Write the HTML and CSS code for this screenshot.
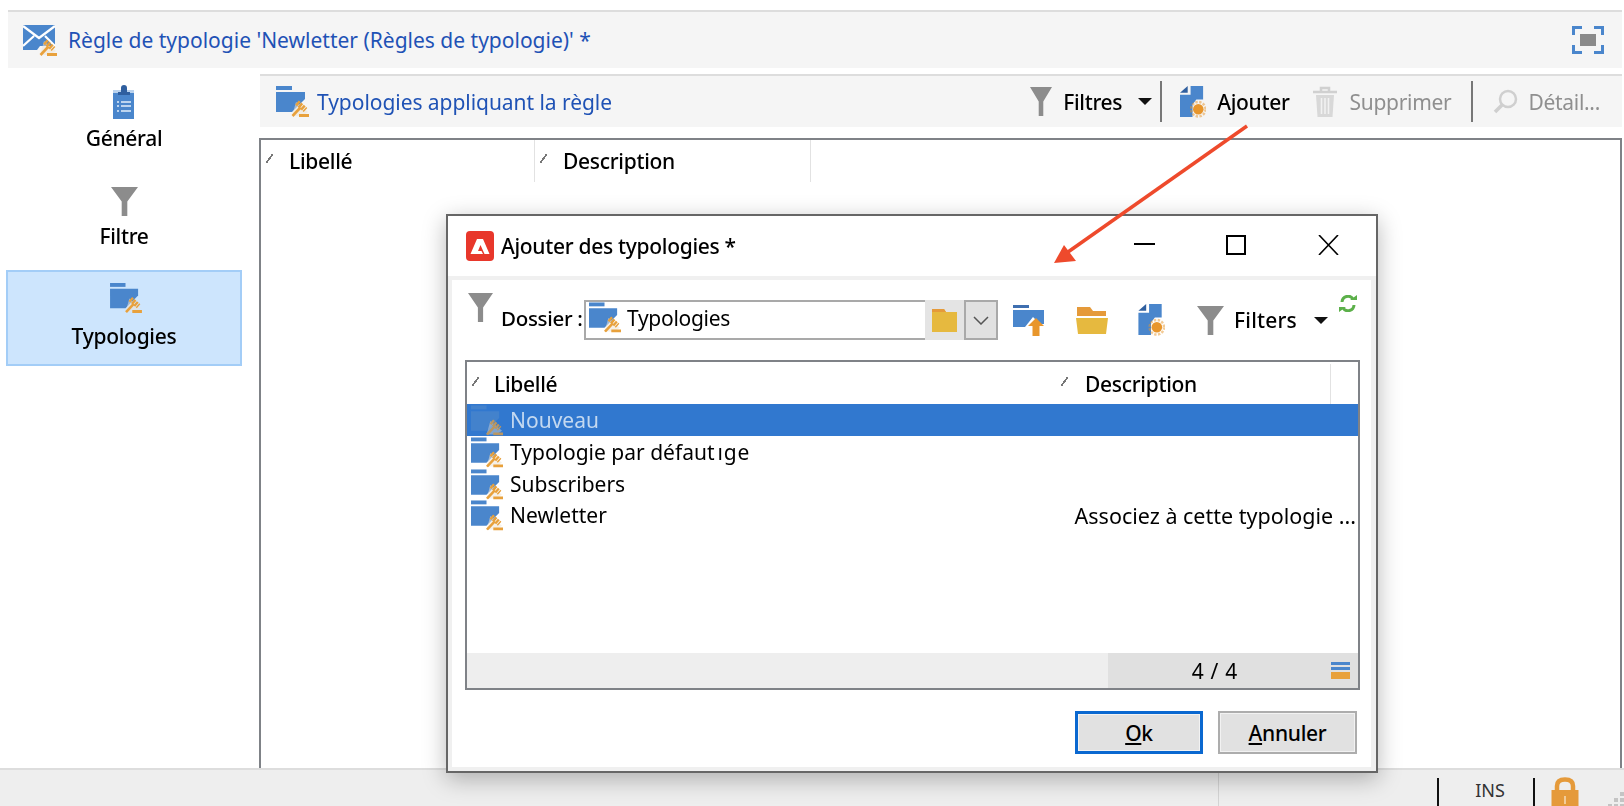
FILE: index.html
```html
<!DOCTYPE html>
<html lang="fr">
<head>
  <meta charset="UTF-8" />
  <title>Règle de typologie</title>
  <link rel="stylesheet" href="styles.css">
</head>
<body>
  <svg class="defs" width="0" height="0">
    <symbol id="gavel" viewBox="0 0 18 18">
      <path d="M5 3 L17 13 L11 17 L1 17 Z" fill="#ece4d6" opacity=".55"/>
      <path d="M1.500 17 L9.500 8.500" stroke="#e8a13c" stroke-width="2.600" fill="none"/>
      <path d="M6 3.500 L14.500 11" stroke="#e8a13c" stroke-width="5.500" fill="none" stroke-dasharray="2.500 .8"/>
      <path d="M8 16.500 H18" stroke="#e8a13c" stroke-width="3" fill="none"/>
    </symbol>
    <symbol id="typo" viewBox="0 0 33 31">
      <path d="M0 0 H16 V4 H0 Z" fill="#4a86cc"/>
      <path d="M0 6 H29 V13 L16 26 H0 Z" fill="#4a86cc"/>
      <use href="#gavel" x="15" y="13" width="18" height="18"/>
    </symbol>
    <symbol id="funnel" viewBox="0 0 24 30" preserveAspectRatio="none">
      <path d="M0 0 H24 L14.500 15 V30 H9.500 V15 Z" fill="#8c8c8c"/>
    </symbol>
    <symbol id="newdoc" viewBox="0 0 27 33">
      <path d="M11 0 H24 V14 H17 L13 19 V32 H0 V9 H11 Z" fill="#4a86cc"/>
      <path d="M0 7 L8 0 V7 Z" fill="#2f5f9f"/>
      <circle cx="19" cy="24" r="5.500" fill="#e8962c"/>
      <circle cx="19" cy="24" r="7.500" fill="none" stroke="#e8962c" stroke-width="2.500" stroke-dasharray="2.500 1.500" opacity=".5"/>
    </symbol>
  </svg>

  <div class="app">
    <header class="title-bar">
      <svg class="title-icon" viewBox="0 0 34 31">
        <path d="M0 0 H32 V21 H17 L14 25 H0 Z" fill="#4a86cc"/>
        <path d="M0 1 L16 13 L32 1 M0 21 L11 11 M32 21 L22 11" stroke="#fff" stroke-width="2.200" fill="none"/>
        <use href="#gavel" x="16" y="13" width="18" height="18"/>
      </svg>
      <span class="title-text">Règle de typologie 'Newletter (Règles de typologie)' *</span>
      <svg class="fullscreen" viewBox="0 0 32 28">
        <path d="M1.500 9 V1.500 H10 M22 1.500 H30.500 V9 M30.500 19 V26.500 H22 M10 26.500 H1.500 V19" stroke="#4a86cc" stroke-width="3" fill="none"/>
        <rect x="8" y="8" width="16" height="12" fill="#8a8a8a"/>
      </svg>
    </header>

    <div class="workspace">
      <nav class="sidebar">
        <div class="side-item general">
          <svg class="side-icon" width="28" height="34" viewBox="0 0 28 34">
            <path d="M3 5 H24 V34 H3 Z" fill="#4a86cc"/>
            <path d="M3 5 H24 V8 H3 Z" fill="#b9d2ee"/>
            <path d="M11 7 V3 Q11 0 14 0 Q17 0 17 3 V7 H20 V10 H8 V7 Z" fill="#2f5f9f"/>
            <path d="M7 17 H9 M11 17 H21 M7 21 H9 M11 21 H21 M7 26 H9 M11 26 H21" stroke="#bcd4ef" stroke-width="1.800"/>
          </svg>
          <span>Général</span>
        </div>
        <div class="side-item filter">
          <svg class="side-icon" width="27" height="29"><use href="#funnel"/></svg>
          <span>Filtre</span>
        </div>
        <div class="side-item active">
          <svg class="side-icon" width="32" height="30"><use href="#typo"/></svg>
          <span>Typologies</span>
        </div>
      </nav>

      <main class="panel">
        <div class="toolbar">
          <svg class="tb-typo" width="33" height="31"><use href="#typo"/></svg>
          <span class="tb-title">Typologies appliquant la règle</span>
          <div class="tb-actions">
            <svg width="22" height="29"><use href="#funnel"/></svg>
            <span class="tb-label filtres">Filtres</span>
            <span class="caret"></span>
            <span class="tb-sep first"></span>
            <svg width="26" height="32"><use href="#newdoc"/></svg>
            <span class="tb-label ajouter">Ajouter</span>
            <svg class="trash" width="26" height="32" viewBox="0 0 26 32">
              <path d="M1 6 H25 M9 6 V2 H17 V6" stroke="#d0d0d0" stroke-width="2.500" fill="none"/>
              <path d="M4 9 H22 L20.500 31 H5.500 Z" fill="#d8d8d8"/>
              <path d="M9.500 12 V28 M13 12 V28 M16.500 12 V28" stroke="#f2f2f2" stroke-width="1.500"/>
            </svg>
            <span class="tb-label muted supprimer">Supprimer</span>
            <span class="tb-sep second"></span>
            <svg width="25" height="25" viewBox="0 0 25 25">
              <circle cx="15" cy="10" r="8" fill="none" stroke="#cfcfcf" stroke-width="2.500"/>
              <path d="M9 16 L2 23" stroke="#cfcfcf" stroke-width="3.500"/>
            </svg>
            <span class="tb-label muted detail">Détail...</span>
          </div>
        </div>

        <section class="table">
          <div class="col col-label"><i class="sort"></i>Libellé</div>
          <div class="col col-desc"><i class="sort"></i>Description</div>
        </section>
      </main>
    </div>

    <footer class="status-bar">
      <span class="st-cell wide"></span>
      <span class="st-cell gap"></span>
      <span class="st-cell ins">INS</span>
      <svg class="lock" width="28" height="29" viewBox="0 0 28 29">
        <path d="M6 14 V9 Q6 2.500 14 2.500 Q22 2.500 22 9 V14" fill="none" stroke="#e59a3a" stroke-width="4.500"/>
        <rect x="0.500" y="13" width="27" height="16" fill="#e59a3a"/>
        <path d="M14 19 V27" stroke="#f6dcb8" stroke-width="1.500"/>
      </svg>
      <span class="grip"><i></i><i></i><i></i><i></i><i></i><i></i><i></i><i></i><i></i></span>
    </footer>
  </div>

  <div class="dialog">
    <div class="dlg-head">
      <svg class="adobe" width="28" height="30" viewBox="0 0 28 30">
        <rect width="28" height="30" rx="4" fill="#e8372b"/>
        <path d="M11 8 H17 L23.500 23 H18.500 L14.500 14 L12 20 H15.500 L17 23 H4.500 Z" fill="#fff"/>
      </svg>
      <span class="dlg-title">Ajouter des typologies *</span>
      <svg class="win-btn min" width="21" height="20" viewBox="0 0 21 20"><path d="M0 9 H21" stroke="#000" stroke-width="2"/></svg>
      <svg class="win-btn max" width="20" height="20" viewBox="0 0 20 20"><rect x="1" y="1" width="18" height="18" fill="none" stroke="#000" stroke-width="2"/></svg>
      <svg class="win-btn close" width="21" height="20" viewBox="0 0 21 20"><path d="M1 0 L20 20 M20 0 L1 20" stroke="#000" stroke-width="1.600"/></svg>
    </div>

    <div class="dlg-body">
      <div class="dlg-tools">
        <svg class="dlg-funnel" width="25" height="29"><use href="#funnel"/></svg>
        <span class="dossier">Dossier :</span>
        <div class="combo">
          <div class="combo-input">
            <svg width="32" height="31"><use href="#typo"/></svg>
            <span>Typologies</span>
          </div>
          <div class="combo-folder">
            <svg width="25" height="23" viewBox="0 0 25 23">
              <path d="M0 0 H12 L14 3 H25 V23 H0 Z" fill="#e6b93f"/>
              <path d="M0 0 H12 L14 3 H0 Z" fill="#e59a3a"/>
            </svg>
          </div>
          <div class="combo-arrow">
            <svg width="16" height="9" viewBox="0 0 16 9"><path d="M1 1 L8 8 L15 1" fill="none" stroke="#555" stroke-width="1.500"/></svg>
          </div>
        </div>
        <svg class="tool-first" width="31" height="31" viewBox="0 0 31 31">
          <path d="M0 0 H16 V3 H0 Z" fill="#3f6fb0"/>
          <path d="M0 5 H31 V19 H27 L20 12 L12 22 H0 Z" fill="#4a86cc"/>
          <path d="M23 13 L31 21 H26.500 V31 H19.500 V21 H15 Z" fill="#e8962c"/>
        </svg>
        <svg class="tool folder" width="32" height="27" viewBox="0 0 32 27">
          <path d="M1 0 H14 L17 4 H30 V9 H1 Z" fill="#e59a3a"/>
          <path d="M0 11 H32 L30 27 H2 Z" fill="#e6b93f"/>
        </svg>
        <svg class="tool doc" width="27" height="32"><use href="#newdoc"/></svg>
        <svg class="tool funnel" width="27" height="29"><use href="#funnel"/></svg>
        <span class="filters">Filters</span>
        <span class="caret small"></span>
        <svg class="refresh" width="18" height="17" viewBox="0 0 18 17">
          <path d="M3 7 A6 6 0 0 1 14 4 M15 10 A6 6 0 0 1 4 13" fill="none" stroke="#5cb04a" stroke-width="3"/>
          <path d="M11 5 H18 V0 Z M7 12 H0 V17 Z" fill="#5cb04a"/>
        </svg>
      </div>

      <div class="list">
        <div class="list-head">
          <div class="lh-label"><i class="sort"></i>Libellé</div>
          <div class="lh-desc"><i class="sort"></i>Description</div>
          <div class="lh-end"></div>
        </div>
        <div class="list-rows">
          <div class="row selected">
            <svg class="row-icon" width="32" height="31"><use href="#typo"/></svg>
            <span class="row-label">Nouveau</span>
          </div>
          <div class="row">
            <svg class="row-icon" width="32" height="31"><use href="#typo"/></svg>
            <span class="row-label">Typologie par défaut<span class="ghost">ıge</span></span>
          </div>
          <div class="row">
            <svg class="row-icon" width="32" height="31"><use href="#typo"/></svg>
            <span class="row-label">Subscribers</span>
          </div>
          <div class="row last">
            <svg class="row-icon" width="32" height="31"><use href="#typo"/></svg>
            <span class="row-label">Newletter</span>
            <span class="row-desc">Associez à cette typologie ...</span>
          </div>
        </div>
        <div class="list-foot">
          <div class="foot-fill"></div>
          <div class="foot-count">
            <span>4 / 4</span>
            <svg width="19" height="17" viewBox="0 0 19 17">
              <rect width="19" height="3" fill="#4a86cc"/>
              <rect y="5" width="19" height="3" fill="#4a86cc"/>
              <rect y="10" width="19" height="7" fill="#e8a13c"/>
            </svg>
          </div>
        </div>
      </div>

      <div class="dlg-buttons">
        <button class="btn primary"><u>O</u>k</button>
        <button class="btn"><u>A</u>nnuler</button>
      </div>
    </div>
  </div>

  <svg class="arrow" width="1624" height="806" viewBox="0 0 1624 806">
    <path d="M1247 126 L1068 252" stroke="#ee4a2c" stroke-width="3.500" fill="none"/>
    <path d="M1054 263 L1064 245 L1076 261 Z" fill="#ee4a2c"/>
  </svg>
</body>
</html>
```

FILE: styles.css
```css
* {
  box-sizing: border-box;
}

body {
  margin: 0;
  width: 1624px;
  height: 806px;
  overflow: hidden;
  background: #fff;
  font-family: "Noto Sans", sans-serif;
  font-size: 21px;
  letter-spacing: -0.3px;
  color: #000;
  filter: blur(0.3px);
}

svg {
  flex: none;
  display: block;
}

.defs {
  position: absolute;
}

.app {
  display: flex;
  flex-direction: column;
  height: 806px;
  padding-top: 10px;
}

/* top title */
.title-bar {
  display: flex;
  align-items: center;
  height: 58px;
  margin: 0 2px 0 8px;
  padding: 0 18px 0 15px;
  background: #f5f5f5;
  border-top: 2px solid #ddd;
}

.title-icon {
  width: 34px;
  height: 31px;
}

.title-text {
  margin-left: 11px;
  color: #1f52b5;
  letter-spacing: 0;
}

.fullscreen {
  width: 32px;
  height: 28px;
  margin-left: auto;
}

.workspace {
  flex: 1;
  display: flex;
  min-height: 0;
}

/* left nav */
.sidebar {
  width: 259px;
  flex: none;
  padding: 15px 0 0 6px;
}

.side-item {
  display: flex;
  flex-direction: column;
  align-items: center;
  width: 236px;
  padding-top: 2px;
  font-weight: 500;
}

.side-item.general {
  height: 102px;
}

.side-item.general span {
  margin-top: 5px;
}

.side-item.filter {
  height: 85px;
}

.side-item.filter span {
  margin-top: 6px;
}

.side-item.active {
  height: 96px;
  padding-top: 11px;
  background: #cde5fd;
  border: 2px solid #a3cdf7;
}

.side-item.active .side-icon {
  margin-left: 4px;
}

.side-item.active span {
  margin-top: 9px;
}

.panel {
  flex: 1;
  display: flex;
  flex-direction: column;
  min-width: 0;
  padding: 6px 2px 0 0;
}

.toolbar {
  display: flex;
  align-items: center;
  height: 53px;
  margin-left: 1px;
  padding-left: 16px;
  background: #f5f5f5;
  border-top: 2px solid #ddd;
}

.tb-title {
  margin-left: 8px;
  color: #1f52b5;
  letter-spacing: -0.05px;
}

.tb-actions {
  display: flex;
  align-items: center;
  margin-left: auto;
  padding-right: 22px;
}

.tb-label {
  font-weight: 500;
}

.tb-label.filtres {
  margin-left: 11px;
}

.tb-label.ajouter {
  margin-left: 11px;
}

.tb-label.muted {
  color: #8f8f8f;
  font-weight: 400;
}

.trash {
  margin-left: 22px;
}

.tb-label.supprimer {
  margin-left: 12px;
}

.tb-label.detail {
  margin-left: 10px;
}

.caret {
  width: 0;
  height: 0;
  margin-left: 16px;
  border-left: 7px solid transparent;
  border-right: 7px solid transparent;
  border-top: 7px solid #111;
}

.tb-sep {
  width: 2px;
  height: 41px;
  background: #777;
}

.tb-sep.first {
  margin: 0 18px 0 8px;
}

.tb-sep.second {
  margin: 0 20px 0 20px;
}

.table {
  flex: 1;
  display: flex;
  align-items: flex-start;
  margin: 11px 0 -3px;
  background: #fff;
  border: 2px solid #7f8287;
}

.col {
  display: flex;
  align-items: center;
  height: 42px;
  padding-left: 5px;
  border-right: 1px solid #e2e2e2;
  font-weight: 500;
}

.col-label {
  width: 274px;
}

.col-desc {
  width: 276px;
}

.sort {
  width: 7px;
  height: 9px;
  margin: -6px 16px 0 0;
  background: linear-gradient(to bottom right, transparent 42%, #777 42%, #777 58%, transparent 58%);
}

/* status */
.status-bar {
  position: relative;
  flex: none;
  display: flex;
  height: 38px;
  background: #eee;
  border-top: 2px solid #ddd;
}

.st-cell.wide {
  width: 1219px;
  border-right: 1px solid #d4d4d4;
}

.st-cell.gap {
  width: 220px;
  border-right: 2px solid #111;
  margin: 8px 0 0;
}

.st-cell.ins {
  width: 96px;
  margin-top: 8px;
  padding-left: 8px;
  border-right: 2px solid #111;
  font-size: 18px;
  letter-spacing: 0;
  text-align: center;
  line-height: 24px;
  color: #333;
}

.lock {
  margin: 7px 0 0 16px;
}

.grip {
  display: grid;
  grid-template-columns: repeat(3, 4px);
  grid-auto-rows: 4px;
  gap: 2px;
  margin: 22px 0 0 29px;
}

.grip i {
  background: #c4c4c4;
}

.grip i:nth-child(1),
.grip i:nth-child(2),
.grip i:nth-child(4) {
  background: transparent;
}

/* dialog window */
.dialog {
  position: absolute;
  left: 446px;
  top: 214px;
  width: 932px;
  height: 559px;
  display: flex;
  flex-direction: column;
  background: #fff;
  border: 2px solid #666;
  box-shadow: 0 6px 22px rgba(0, 0, 0, 0.28);
}

.dlg-head {
  flex: none;
  display: flex;
  align-items: center;
  height: 60px;
  padding-left: 18px;
}

.dlg-title {
  margin-left: 7px;
  font-weight: 500;
}

.win-btn {
  margin-bottom: 3px;
}

.win-btn.min {
  margin-left: auto;
}

.win-btn.max {
  margin-left: 71px;
}

.win-btn.close {
  margin-left: 72px;
  margin-right: 37px;
}

.dlg-body {
  flex: 1;
  display: flex;
  flex-direction: column;
  background: #fff;
  border: solid #f0f0f0;
  border-width: 4px 5px 4px 4px;
}

.dlg-tools {
  flex: none;
  display: flex;
  align-items: center;
  height: 40px;
  margin-top: 20px;
  padding-left: 16px;
}

.dlg-funnel {
  align-self: flex-start;
  margin-top: -7px;
}

.dossier {
  flex: none;
  width: 83px;
  margin: 0 0 5px 8px;
  font-size: 20.5px;
  font-weight: 500;
  white-space: nowrap;
}

.combo {
  display: flex;
  height: 40px;
}

.combo-input {
  display: flex;
  align-items: center;
  gap: 6px;
  width: 341px;
  padding: 0 0 5px 3px;
  background: #fff;
  border: 2px solid #a9a9a9;
  border-right: 0;
}

.combo-folder {
  display: flex;
  align-items: center;
  justify-content: center;
  width: 39px;
  background: #e4e4e4;
}

.combo-arrow {
  display: flex;
  align-items: center;
  justify-content: center;
  width: 34px;
  background: #e1e1e1;
  border: 2px solid #a9a9a9;
}

.tool-first {
  margin-left: 15px;
}

.tool.folder {
  margin-left: 32px;
}

.tool.doc {
  margin-left: 30px;
}

.tool.funnel {
  margin-left: 32px;
}

.filters {
  margin-left: 10px;
  font-weight: 500;
  letter-spacing: 0.2px;
}

.caret.small {
  margin-left: 17px;
}

.refresh {
  align-self: flex-start;
  margin: -5px 0 0 11px;
}

.list {
  flex: none;
  display: flex;
  flex-direction: column;
  width: 895px;
  height: 330px;
  margin: 20px 0 0 13px;
  border: 2px solid #7f8287;
}

.list-head {
  flex: none;
  display: flex;
  height: 42px;
  padding-top: 2px;
  font-weight: 500;
}

.lh-label,
.lh-desc {
  display: flex;
  align-items: center;
}

.lh-label {
  width: 592px;
  padding-left: 5px;
}

.lh-label .sort {
  margin-right: 15px;
}

.lh-desc {
  width: 272px;
  padding-left: 2px;
  border-right: 1px solid #e2e2e2;
}

.lh-desc .sort {
  margin-right: 17px;
}

.list-rows {
  flex: 1;
  font-size: 21px;
  letter-spacing: 0;
}

.row {
  display: flex;
  align-items: center;
  height: 32px;
  padding-left: 4px;
}

.row.last {
  height: 30px;
}

.row.selected {
  background: #3178cf;
  color: #c4d9f0;
}

.row.selected .row-icon {
  opacity: 0.75;
}

.row-label {
  margin-left: 7px;
}

.ghost {
  margin-left: 3px;
  letter-spacing: 0.8px;
}

.row-desc {
  margin-left: auto;
  padding-right: 2px;
  font-size: 21.5px;
}

.list-foot {
  flex: none;
  display: flex;
  height: 35px;
}

.foot-fill {
  width: 641px;
  background: #eee;
}

.foot-count {
  flex: 1;
  display: flex;
  align-items: center;
  justify-content: flex-end;
  gap: 94px;
  padding-right: 8px;
  background: #e0e0e0;
  word-spacing: 2px;
}

.dlg-buttons {
  display: flex;
  justify-content: flex-end;
  gap: 15px;
  margin-top: 21px;
  padding-right: 14px;
}

.btn {
  height: 43px;
  width: 139px;
  padding: 0;
  background: #e1e1e1;
  border: 2px solid #adadad;
  box-shadow: inset 0 0 0 1px #f2f2f2;
  font: 500 21px "Noto Sans", sans-serif;
  letter-spacing: -0.3px;
  color: #000;
}

.btn.primary {
  width: 128px;
  border: 3px solid #0a68d0;
}

.arrow {
  position: absolute;
  left: 0;
  top: 0;
  pointer-events: none;
}
```
